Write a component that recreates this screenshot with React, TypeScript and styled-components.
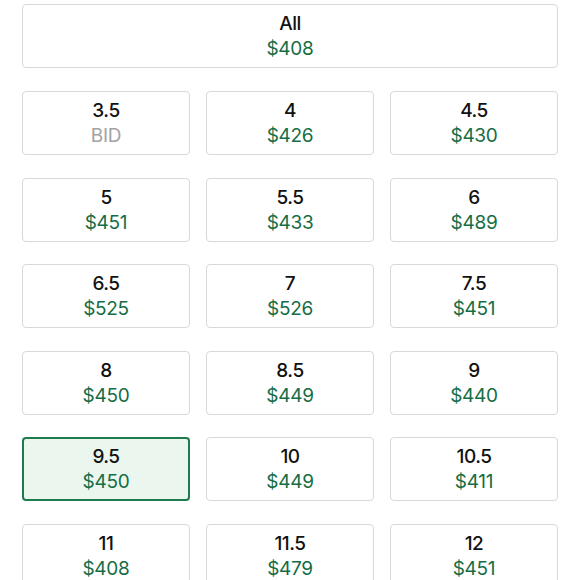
import React from "react";
import styled, { createGlobalStyle } from "styled-components";

const Global = createGlobalStyle`
  html, body { margin: 0; padding: 0; background: #ffffff; }
  body { font-family: Inter, "Noto Sans", "Liberation Sans", sans-serif; overflow: hidden; }
`;

const Page = styled.div`
  width: 536px;
  padding: 4px 0 0 22px;
  display: flex;
  flex-direction: column;
  gap: 23px;
`;

const Grid = styled.div`
  display: grid;
  grid-template-columns: repeat(3, 168px);
  column-gap: 16px;
  row-gap: 22.5px;
`;

const SizeButton = styled.button<{ $selected?: boolean }>`
  box-sizing: border-box;
  height: 64px;
  width: 100%;
  margin: 0;
  padding: 1px 0 0;
  display: flex;
  flex-direction: column;
  align-items: center;
  justify-content: center;
  gap: 3px;
  border-radius: 4px;
  border: ${(p) => (p.$selected ? "2px solid #1f7a4d" : "1px solid #d9d9d9")};
  background: ${(p) => (p.$selected ? "#eaf6ee" : "#ffffff")};
  font-family: inherit;
  cursor: pointer;
`;

const Label = styled.span`
  font-size: 19px;
  line-height: 22px;
  font-weight: 500;
  color: #111111;
  letter-spacing: -0.5px;
`;

const Price = styled.span<{ $bid?: boolean }>`
  font-size: 19px;
  line-height: 22px;
  color: ${(p) => (p.$bid ? "#a3a3a3" : "#156d45")};
  letter-spacing: -0.3px;
`;

const sizes: [string, string | null][] = [
  ["3.5", null],
  ["4", "$426"],
  ["4.5", "$430"],
  ["5", "$451"],
  ["5.5", "$433"],
  ["6", "$489"],
  ["6.5", "$525"],
  ["7", "$526"],
  ["7.5", "$451"],
  ["8", "$450"],
  ["8.5", "$449"],
  ["9", "$440"],
  ["9.5", "$450"],
  ["10", "$449"],
  ["10.5", "$411"],
  ["11", "$408"],
  ["11.5", "$479"],
  ["12", "$451"],
];

export default function App() {
  return (
    <>
      <Global />
      <Page>
        <SizeButton>
          <Label>All</Label>
          <Price>$408</Price>
        </SizeButton>
        <Grid>
          {sizes.map(([s, p]) => (
            <SizeButton key={s} $selected={s === "9.5"}>
              <Label>{s}</Label>
              <Price $bid={!p}>{p ?? "BID"}</Price>
            </SizeButton>
          ))}
        </Grid>
      </Page>
    </>
  );
}
